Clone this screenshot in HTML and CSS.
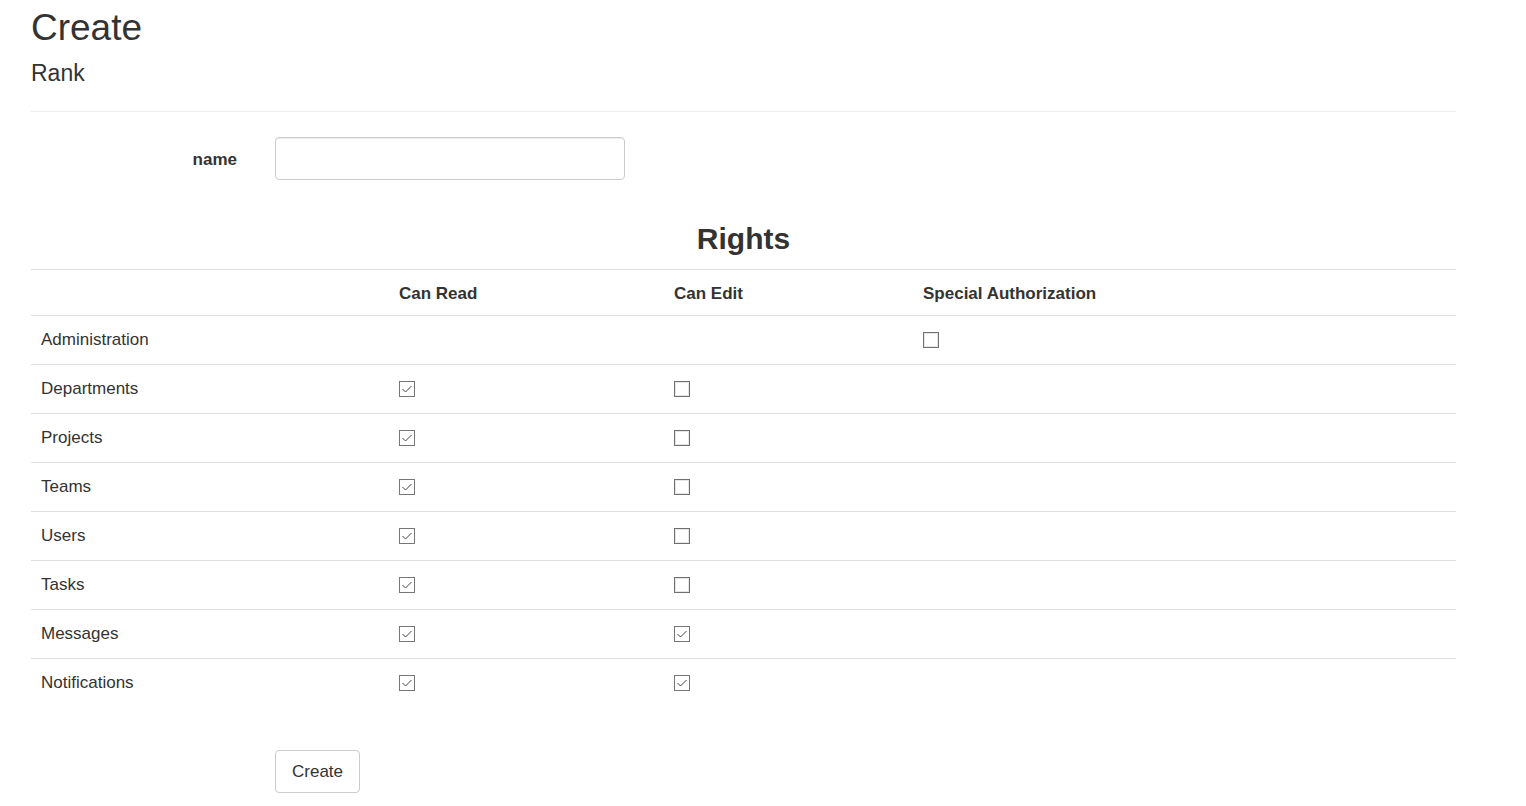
FILE: index.html
```html
<!DOCTYPE html>
<html>
<head>
<meta charset="utf-8">
<title>Create - Rank</title>
<link rel="stylesheet" href="styles.css">
</head>
<body>
<div class="page">
  <h1 class="title">Create</h1>
  <h3 class="subtitle">Rank</h3>
  <hr class="rule">

  <div class="form-row">
    <label class="form-label" for="name">name</label>
    <input class="form-input" id="name" type="text">
  </div>

  <h2 class="rights-title">Rights</h2>

  <table class="rights">
    <colgroup>
      <col class="c1"><col class="c2"><col class="c3"><col class="c4">
    </colgroup>
    <thead>
      <tr><th></th><th>Can Read</th><th>Can Edit</th><th>Special Authorization</th></tr>
    </thead>
    <tbody>
      <tr><td>Administration</td><td></td><td></td>
        <td><svg class="cb" viewBox="0 0 16 16" width="16" height="16"><rect x="0.5" y="0.5" width="15" height="15" fill="#fff" stroke="#707070"/><rect x="1.5" y="1.5" width="13" height="13" fill="none" stroke="#e6e6e6"/></svg></td></tr>
      <tr><td>Departments</td>
        <td><svg class="cb" viewBox="0 0 16 16" width="16" height="16"><rect x="0.5" y="0.5" width="15" height="15" fill="#fff" stroke="#767676"/><polyline points="3.5,8 6.5,11 12.5,5" fill="none" stroke="#444" stroke-width="1"/></svg></td>
        <td><svg class="cb" viewBox="0 0 16 16" width="16" height="16"><rect x="0.5" y="0.5" width="15" height="15" fill="#fff" stroke="#707070"/><rect x="1.5" y="1.5" width="13" height="13" fill="none" stroke="#e6e6e6"/></svg></td><td></td></tr>
      <tr><td>Projects</td>
        <td><svg class="cb" viewBox="0 0 16 16" width="16" height="16"><rect x="0.5" y="0.5" width="15" height="15" fill="#fff" stroke="#767676"/><polyline points="3.5,8 6.5,11 12.5,5" fill="none" stroke="#444" stroke-width="1"/></svg></td>
        <td><svg class="cb" viewBox="0 0 16 16" width="16" height="16"><rect x="0.5" y="0.5" width="15" height="15" fill="#fff" stroke="#707070"/><rect x="1.5" y="1.5" width="13" height="13" fill="none" stroke="#e6e6e6"/></svg></td><td></td></tr>
      <tr><td>Teams</td>
        <td><svg class="cb" viewBox="0 0 16 16" width="16" height="16"><rect x="0.5" y="0.5" width="15" height="15" fill="#fff" stroke="#767676"/><polyline points="3.5,8 6.5,11 12.5,5" fill="none" stroke="#444" stroke-width="1"/></svg></td>
        <td><svg class="cb" viewBox="0 0 16 16" width="16" height="16"><rect x="0.5" y="0.5" width="15" height="15" fill="#fff" stroke="#707070"/><rect x="1.5" y="1.5" width="13" height="13" fill="none" stroke="#e6e6e6"/></svg></td><td></td></tr>
      <tr><td>Users</td>
        <td><svg class="cb" viewBox="0 0 16 16" width="16" height="16"><rect x="0.5" y="0.5" width="15" height="15" fill="#fff" stroke="#767676"/><polyline points="3.5,8 6.5,11 12.5,5" fill="none" stroke="#444" stroke-width="1"/></svg></td>
        <td><svg class="cb" viewBox="0 0 16 16" width="16" height="16"><rect x="0.5" y="0.5" width="15" height="15" fill="#fff" stroke="#707070"/><rect x="1.5" y="1.5" width="13" height="13" fill="none" stroke="#e6e6e6"/></svg></td><td></td></tr>
      <tr><td>Tasks</td>
        <td><svg class="cb" viewBox="0 0 16 16" width="16" height="16"><rect x="0.5" y="0.5" width="15" height="15" fill="#fff" stroke="#767676"/><polyline points="3.5,8 6.5,11 12.5,5" fill="none" stroke="#444" stroke-width="1"/></svg></td>
        <td><svg class="cb" viewBox="0 0 16 16" width="16" height="16"><rect x="0.5" y="0.5" width="15" height="15" fill="#fff" stroke="#707070"/><rect x="1.5" y="1.5" width="13" height="13" fill="none" stroke="#e6e6e6"/></svg></td><td></td></tr>
      <tr><td>Messages</td>
        <td><svg class="cb" viewBox="0 0 16 16" width="16" height="16"><rect x="0.5" y="0.5" width="15" height="15" fill="#fff" stroke="#767676"/><polyline points="3.5,8 6.5,11 12.5,5" fill="none" stroke="#444" stroke-width="1"/></svg></td>
        <td><svg class="cb" viewBox="0 0 16 16" width="16" height="16"><rect x="0.5" y="0.5" width="15" height="15" fill="#fff" stroke="#767676"/><polyline points="3.5,8 6.5,11 12.5,5" fill="none" stroke="#444" stroke-width="1"/></svg></td><td></td></tr>
      <tr><td>Notifications</td>
        <td><svg class="cb" viewBox="0 0 16 16" width="16" height="16"><rect x="0.5" y="0.5" width="15" height="15" fill="#fff" stroke="#767676"/><polyline points="3.5,8 6.5,11 12.5,5" fill="none" stroke="#444" stroke-width="1"/></svg></td>
        <td><svg class="cb" viewBox="0 0 16 16" width="16" height="16"><rect x="0.5" y="0.5" width="15" height="15" fill="#fff" stroke="#767676"/><polyline points="3.5,8 6.5,11 12.5,5" fill="none" stroke="#444" stroke-width="1"/></svg></td><td></td></tr>
    </tbody>
  </table>

  <div class="actions">
    <button class="btn" type="button">Create</button>
  </div>
</div>
</body>
</html>
```

FILE: styles.css
```css
html, body {
  margin: 0;
  padding: 0;
  background: #fff;
}

body {
  font-family: "Liberation Sans", Arial, Helvetica, sans-serif;
  font-size: 17px;
  line-height: 1.42857;
  color: #333;
}

.page {
  width: 1425px;
  padding: 0 0 0 31px;
}

.title {
  font-size: 37px;
  font-weight: 400;
  line-height: 1.1;
  margin: 8px 0 0;
}

.subtitle {
  font-size: 23px;
  font-weight: 400;
  line-height: 1.1;
  margin: 12px 0 0;
}

.rule {
  border: 0;
  border-top: 1px solid #eee;
  margin: 25px 0 0;
  height: 0;
}

.form-row {
  display: flex;
  align-items: center;
  margin-top: 25px;
}

.form-label {
  width: 206px;
  text-align: right;
  font-weight: 700;
  margin-right: 38px;
  padding-top: 3px;
}

.form-input {
  box-sizing: border-box;
  width: 350px;
  height: 43px;
  border: 1px solid #ccc;
  border-radius: 4px;
  box-shadow: inset 0 1px 1px rgba(0,0,0,0.075);
  font: inherit;
  padding: 6px 12px;
  margin: 0;
}

.rights-title {
  font-size: 30px;
  font-weight: 700;
  line-height: 1.1;
  text-align: center;
  margin: 42px 0 0;
}

.rights {
  width: 1425px;
  border-collapse: collapse;
  margin-top: 14px;
  border-top: 1px solid #ddd;
}

.rights .c1 { width: 358px; }
.rights .c2 { width: 275px; }
.rights .c3 { width: 249px; }

.rights th {
  text-align: left;
  font-weight: 700;
  height: 42px;
  padding: 3px 10px 0;
  border-bottom: 1px solid #ddd;
  vertical-align: middle;
}

.rights td {
  height: 47px;
  padding: 1px 10px 0;
  border-top: 1px solid #ddd;
  vertical-align: middle;
}

.rights tbody tr:first-child td {
  border-top: 0;
}

.cb {
  display: block;
}

.actions {
  margin-top: 43px;
  padding-left: 244px;
}

.btn {
  box-sizing: border-box;
  height: 43px;
  padding: 2px 16px 0;
  font: inherit;
  color: #333;
  background: #fff;
  border: 1px solid #ccc;
  border-radius: 4px;
}
```
